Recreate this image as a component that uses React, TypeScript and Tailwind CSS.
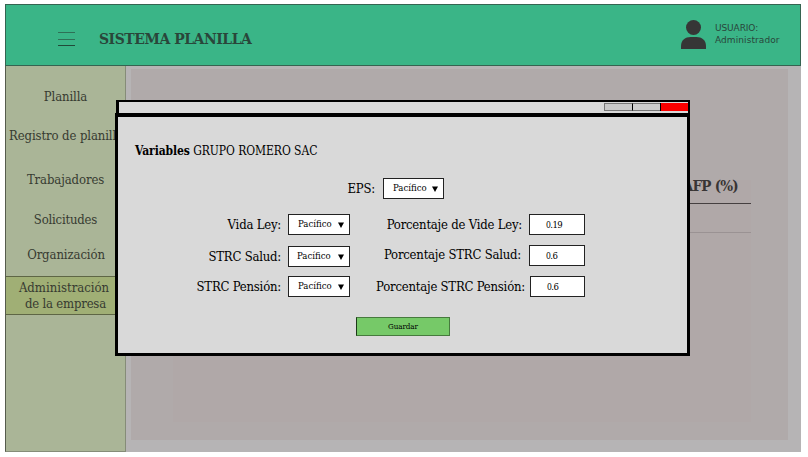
import React from "react";

const navItems = [
  { label: "Planilla", box: "mt-[21px]", text: "tracking-[-0.1px]" },
  { label: "Registro de planillas", box: "mt-[19px]", text: "ml-[3px] self-start tracking-[-0.1px]" },
  { label: "Trabajadores", box: "mt-[24px]", text: "tracking-[-0.1px]" },
  { label: "Solicitudes", box: "mt-[20px]", text: "tracking-[-0.2px]" },
  { label: "Organización", box: "mt-[15px]", text: "ml-px tracking-[-0.1px]" },
];

function Select({ className = "", textClass = "ml-[9px]" }: { className?: string; textClass?: string }) {
  return (
    <div className={`flex h-[21px] shrink-0 items-center border border-[#222] bg-white ${className}`}>
      <span className={`-mt-px text-[9.5px] leading-none whitespace-nowrap ${textClass}`}>Pacífico</span>
      <svg className="mr-[5px] ml-auto mt-px" width="6" height="6" viewBox="0 0 6 6">
        <path d="M0 0.5H6L3 6Z" fill="#000" />
      </svg>
    </div>
  );
}

function Value({ rest, className = "" }: { rest: string; className?: string }) {
  return (
    <div className={`flex h-[21px] shrink-0 items-center border border-[#222] bg-white pt-px pl-4 text-[9.5px] leading-none tracking-[-0.6px] ${className}`}>
      <span>
        <span className="text-[8.5px]">0</span>
        {rest}
      </span>
    </div>
  );
}

function Label({ children, className = "" }: { children: string; className?: string }) {
  return (
    <span className={`shrink-0 pt-px text-right leading-[20px] tracking-[-0.22px] whitespace-nowrap ${className}`}>{children}</span>
  );
}

export default function App() {
  return (
    <div className="relative h-[457px] w-[808px] overflow-hidden bg-white pt-[4px] pl-[5px] font-['DejaVu_Serif_Condensed','DejaVu_Serif',serif] text-[13px] [font-stretch:condensed]">
      <div className="flex h-[448px] w-[796px] flex-col">
        <header className="flex h-[62px] shrink-0 border border-[#356451] bg-[#3ab587] text-[#29463a]">
          <div className="mt-[27px] ml-[52px] flex h-[14px] w-[17px] flex-col justify-between">
            <i className="h-px bg-[#2e7056]" />
            <i className="h-px bg-[#2e7056]" />
            <i className="h-px bg-[#214a39]" />
          </div>
          <h1 className="mt-[24px] ml-[24px] text-[15.5px] leading-[20px] font-bold tracking-[-0.45px] whitespace-nowrap">SISTEMA PLANILLA</h1>
          <svg className="mt-[15px] ml-auto" width="26" height="29" viewBox="0 0 26 29" fill="#363636">
            <circle cx="12.5" cy="7.5" r="7.5" />
            <path d="M0 29V26C0 20 4.500 17 9.500 17H15.500C20.500 17 25 20 25 26V29Z" />
          </svg>
          <div className="mt-[17px] mr-[19px] ml-[8px] w-[66px] font-['DejaVu_Sans',sans-serif] text-[9px] leading-[12px] whitespace-nowrap [font-stretch:normal]">
            <div className="tracking-[-0.1px]">USUARIO:</div>
            <div className="tracking-[0.08px]">Administrador</div>
          </div>
        </header>
        <div className="flex min-h-0 flex-1">
          <nav className="flex w-[121px] shrink-0 flex-col items-center overflow-hidden border-r border-b border-l border-[#858c78] border-l-[#555b4c] bg-[#aab597] text-[#373b31]">
            {navItems.map((item) => (
              <div key={item.label} className={`flex h-[20px] w-full shrink-0 flex-col items-center leading-[20px] whitespace-nowrap ${item.box}`}>
                <span className={item.text}>{item.label}</span>
              </div>
            ))}
            <div className="mt-[11px] flex h-[39px] w-full shrink-0 flex-col items-center border-y border-[#5e6645] bg-[#a0af75] pt-[3px] pr-[3px] leading-[16px] whitespace-nowrap">
              <span>Administración</span>
              <span className="ml-[3px] tracking-[-0.2px]">de la empresa</span>
            </div>
          </nav>
          <main className="flex-1 bg-[#b6b4b5] pt-[3px] pr-[13px] pb-[12px] pl-[5px]">
            <div className="h-full bg-[#b0aaaa] pt-[111px] pr-[37px] pb-[18px] pl-[42px]">
              <div className="h-full bg-[#b0a8a8] text-[#393535]">
                <div className="h-[24px] border-b border-[#453f40] pr-[13px] text-right text-[15px] leading-[12px] font-bold tracking-[-0.75px]">AFP (%)</div>
                <div className="h-[29px] border-b border-[#9a9293]" />
              </div>
            </div>
          </main>
        </div>
      </div>

      <section className="absolute top-[100px] left-[115px] flex h-[256px] w-[576px] flex-col text-black">
        <div className="ml-px flex h-[15px] w-[574px] shrink-0 justify-end border-t-2 border-r-2 border-l-[3px] border-black bg-[#d9d9d9]">
          <div className="mt-px flex h-[8px]">
            <span className="w-[28px] border-t border-b border-l border-[#777] bg-[#c9c9c9]" />
            <span className="w-[28px] border-t border-b border-l border-[#777] border-l-black bg-[#cecece]" />
            <span className="w-[28px] border-l border-black bg-[#fb0000]" />
          </div>
        </div>
        <div className="-mt-[2px] flex h-[243px] w-[575px] shrink-0 flex-col border-[3px] border-t-[4px] border-black bg-[#d9d9d9]">
          <h2 className="mt-[24px] ml-[17px] text-[12px] leading-[20px] tracking-[-0.06px] whitespace-nowrap">
            <b className="tracking-[-0.1px]">Variables</b> GRUPO ROMERO SAC
          </h2>
          <div className="mt-[17px] flex h-[21px]">
            <Label className="w-[257px]">EPS:</Label>
            <Select className="ml-[8px] w-[61px]" />
          </div>
          <div className="mt-[15px] flex h-[21px]">
            <Label className="w-[163px]">Vida Ley:</Label>
            <Select className="ml-[7px] w-[62px]" />
            <Label className="w-[172px]">Porcentaje de Vide Ley:</Label>
            <Value rest=".19" className="ml-[7px] w-[56px]" />
          </div>
          <div className="mt-[10px] flex h-[21px]">
            <Label className="w-[163px] translate-y-px">STRC Salud:</Label>
            <Select className="mt-px ml-[7px] w-[62px]" textClass="ml-[8px]" />
            <Label className="w-[171px] -translate-y-px">Porcentaje STRC Salud:</Label>
            <Value rest=".6" className="ml-[8px] w-[56px]" />
          </div>
          <div className="mt-[10px] flex h-[21px]">
            <Label className="w-[163px]">STRC Pensión:</Label>
            <Select className="ml-[7px] w-[62px]" />
            <Label className="w-[175px]">Porcentaje STRC Pensión:</Label>
            <Value rest=".6" className="ml-[5px] w-[55px]" />
          </div>
          <button className="mt-[20px] ml-[238px] h-[19px] w-[94px] border border-[#467a3d] border-l-[#1d3919] bg-[#76c968] text-[8px] leading-none tracking-[-0.1px]">Guardar</button>
        </div>
      </section>
    </div>
  );
}
